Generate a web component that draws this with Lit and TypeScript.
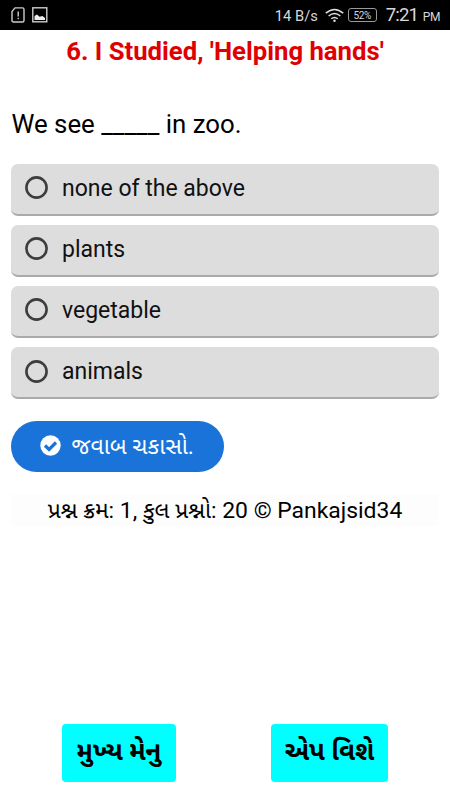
import { LitElement, html, css } from "lit";
import { customElement } from "lit/decorators.js";

@customElement("status-bar")
class StatusBar extends LitElement {
  static styles = css`
    :host { display: flex; align-items: center; height: 30px; background: #000; color: #d8d8d8; padding: 0 10px 0 11px; box-sizing: border-box; }
    svg { display: block; flex: none; }
    .image { margin-left: 7px; }
    .rate { margin-left: auto; font-size: 14.7px; line-height: 30px; white-space: nowrap; padding-top: 1px; }
    .wifi { margin-left: 7px; }
    .battery { margin-left: 4px; width: 29px; height: 14px; box-sizing: border-box; border: 1px solid #999; border-radius: 3px; font-size: 10px; line-height: 13px; text-align: center; letter-spacing: -0.4px; }
    .time { margin-left: 9px; font-size: 18.6px; line-height: 30px; white-space: nowrap; padding-top: 2px; letter-spacing: -0.9px; }
    .time small { font-size: 12px; letter-spacing: -0.4px; margin-left: 1px; }
  `;
  render() {
    return html`
      <svg width="14" height="16" viewBox="0 0 14 16" fill="none" stroke="#ccc" stroke-width="1.4">
        <path d="M4 .9H11.5Q13 .9 13 2.4V13.5Q13 15 11.5 15H2.5Q1 15 1 13.5V4.5Z" />
        <path d="M7.2 4.5V9.5M7.2 10.8V12.3" />
      </svg>
      <svg class="image" width="16" height="16" viewBox="0 0 16 16">
        <rect x=".8" y=".8" width="14" height="14" fill="none" stroke="#ccc" stroke-width="1.4" />
        <path d="M2.5 13V9L5 7.5L7.5 9.8L10.5 9L13 11V13Z" fill="#eee" />
      </svg>
      <span class="rate">14 B/s</span>
      <svg class="wifi" width="19" height="15" viewBox="0 0 20 15" fill="none" stroke="#ddd" stroke-width="1.5">
        <path d="M.8 5Q10-2.8 19.2 5M3.8 8Q10 2.6 16.2 8M6.6 11Q10 8 13.4 11" />
        <circle cx="10" cy="13" r="1.3" fill="#ddd" stroke="none" />
      </svg>
      <span class="battery">52%</span>
      <span class="time">7:21 <small>PM</small></span>
    `;
  }
}

@customElement("answer-option")
class AnswerOption extends LitElement {
  static properties = { label: {} };
  declare label: string;
  static styles = css`
    :host { display: flex; align-items: center; height: 52px; box-sizing: border-box; padding: 0 14px; border-radius: 7px; background: #ddd; border-bottom: 2.4px solid #aaa; color: #111; }
    .radio { display: block; margin-top: -2px; flex: none; }
    .label { margin-left: 14px; font-size: 23px; line-height: 28px; white-space: nowrap; }
  `;
  render() {
    return html`
      <svg class="radio" width="23" height="23" viewBox="0 0 23 23"><circle cx="11.5" cy="11.5" r="10.1" fill="none" stroke="#3d3d3d" stroke-width="2.6" /></svg>
      <span class="label">${this.label}</span>
    `;
  }
}

@customElement("app-root")
class AppRoot extends LitElement {
  static styles = css`
    :host { display: flex; flex-direction: column; height: 800px; background: #fff; overflow: hidden; color: #000; font-family: Roboto, "Noto Sans Gujarati", "Noto Sans", sans-serif; }
    .title { margin: 4px 0 0; text-align: center; font-size: 25.7px; line-height: 34px; font-weight: 700; color: #e00000; white-space: nowrap; }
    .question { margin: 39px 11.5px 0; font-size: 25.8px; line-height: 34px; white-space: nowrap; }
    .options { display: flex; flex-direction: column; gap: 9.2px; margin: 22.5px 11px 0; }
    .check { display: flex; align-items: center; align-self: flex-start; box-sizing: border-box; margin: 22px 0 0 11px; width: 213px; height: 51px; padding: 0 0 2px 28.5px; border: 0; border-radius: 26px; background: #1973d8; color: #fff; font: inherit; font-size: 23px; white-space: nowrap; }
    .check svg { flex: none; margin-right: 11px; }
    .check span { padding-top: 4px; }
    .status { display: flex; align-items: center; justify-content: center; box-sizing: border-box; margin: 22px 11px 0; height: 32px; padding-top: 4px; background: #fdfdfd; font-size: 22.9px; white-space: nowrap; }
    .actions { display: flex; gap: 95px; margin: auto 0 18px 62px; }
    .action { width: 114px; height: 58px; padding: 0; border: 0; border-radius: 4px; background: #0ff; color: #000; font: inherit; font-size: 26px; font-weight: 700; white-space: nowrap; }
    .about { width: 117px; }
  `;
  render() {
    return html`
      <status-bar></status-bar>
      <h1 class="title">6. I Studied, 'Helping hands'</h1>
      <div class="question">We see _____ in zoo.</div>
      <div class="options">
        ${["none of the above", "plants", "vegetable", "animals"].map((o) => html`<answer-option .label=${o}></answer-option>`)}
      </div>
      <button class="check">
        <svg width="21" height="21" viewBox="0 0 21 21"><circle cx="10.5" cy="10.5" r="10.2" fill="#fff" /><path d="M5 10.5L9.1 14.4L16 7.5" fill="none" stroke="#1973d8" stroke-width="3.2" /></svg>
        <span>જવાબ ચકાસો.</span>
      </button>
      <div class="status"><span>પ્રશ્ન ક્રમ: 1, કુલ પ્રશ્નો: 20 © Pankajsid34</span></div>
      <div class="actions">
        <button class="action">મુખ્ય મેનુ</button>
        <button class="action about">એપ વિશે</button>
      </div>
    `;
  }
}
